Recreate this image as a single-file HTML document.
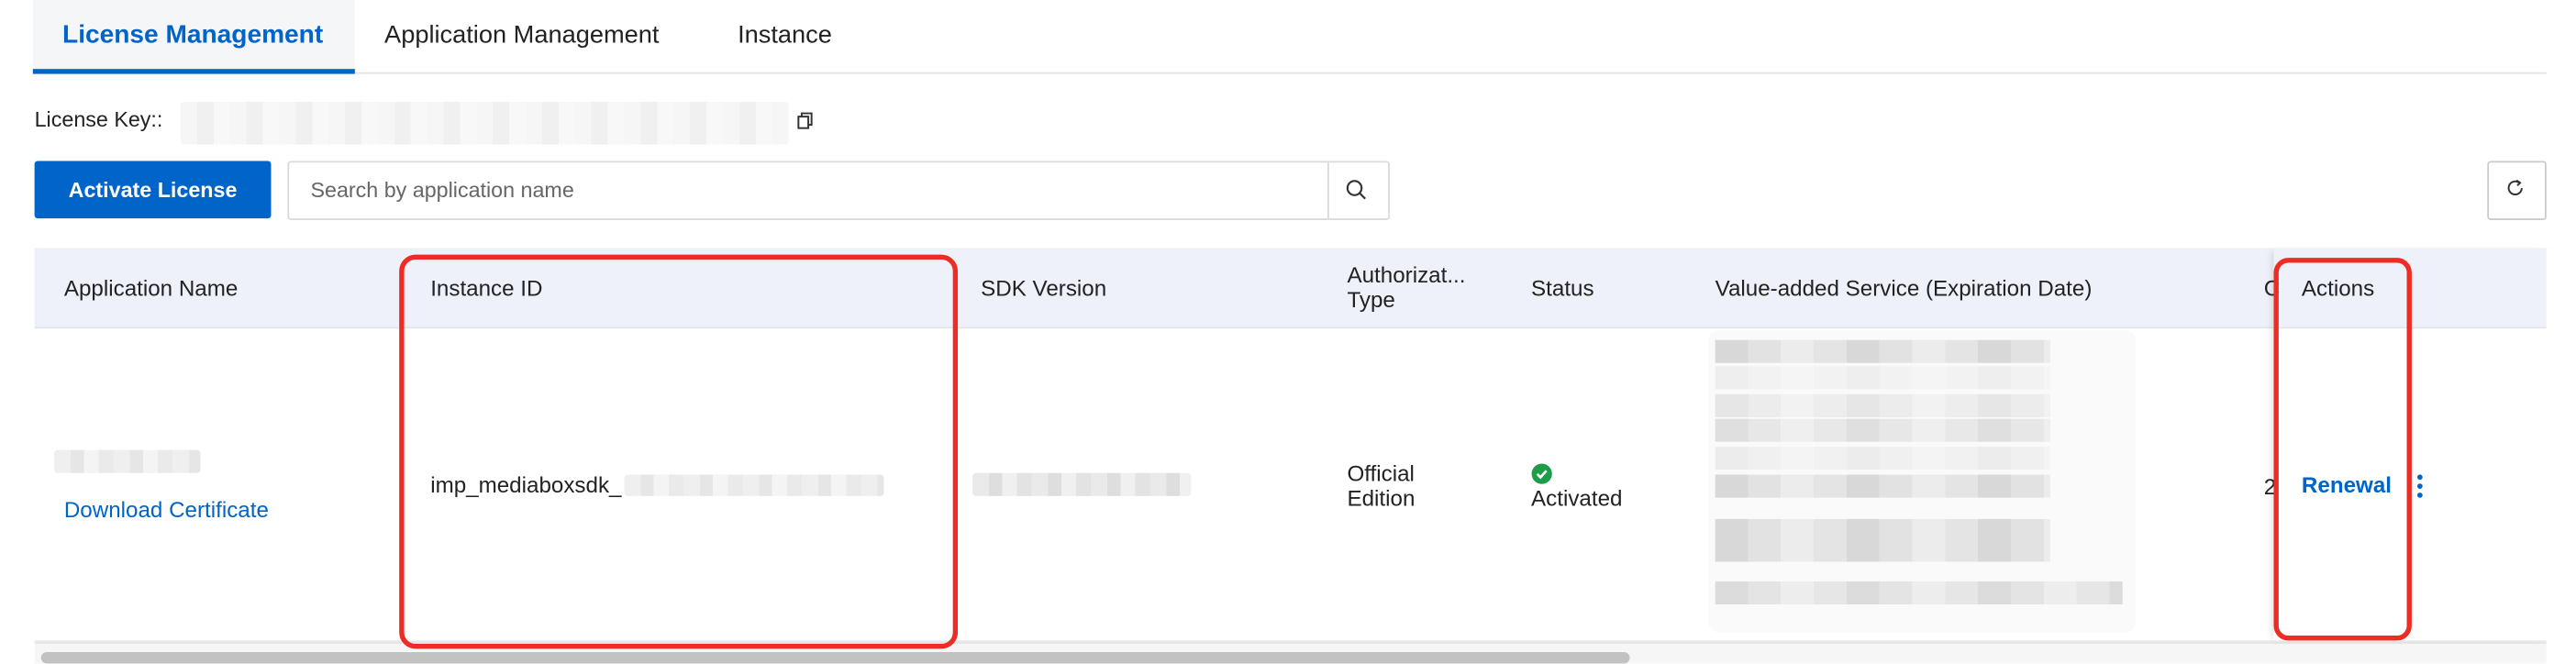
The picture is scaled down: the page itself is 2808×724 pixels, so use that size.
<!DOCTYPE html>
<html><head><meta charset="utf-8"><style>
html,body{margin:0;padding:0;background:#fff;width:2808px;height:722px;overflow:hidden}
#s{position:absolute;left:0;top:0;width:1568px;height:404px;transform:scale(1.790816);transform-origin:0 0;font-family:"Liberation Sans",sans-serif;color:#222;font-size:13.5px}
.a{position:absolute}
.blur{position:absolute;background:repeating-linear-gradient(90deg,#e4e4e4 0 10px,#d6d6d6 10px 18px,#ececec 18px 27px,#dcdcdc 27px 36px);border-radius:2px}
.lt{background:repeating-linear-gradient(90deg,#f0f0f0 0 10px,#e6e6e6 10px 20px,#f4f4f4 20px 30px)}
.row{position:absolute;left:1044px;width:204px;height:14px;background:repeating-linear-gradient(90deg,#d8d8d8 0 20px,#e2e2e2 20px 40px,#ececec 40px 60px,#e4e4e4 60px 80px)}
</style></head><body><div id="s">
<div class="a" style="left:20px;top:0;width:196px;height:43px;background:#f5f6f8"></div>
<div class="a" style="left:20px;top:44px;width:1530px;height:1px;background:#e3e3e3"></div>
<div class="a" style="left:20px;top:42px;width:196px;height:3px;background:#0064c8"></div>
<div class="a" style="left:38px;top:13px;font-size:15.7px;font-weight:bold;color:#0064c8">License Management</div>
<div class="a" style="left:234px;top:13px;font-size:15.2px;color:#222">Application Management</div>
<div class="a" style="left:449px;top:13px;font-size:15.2px;color:#222">Instance</div>

<div class="a" style="left:21px;top:65px;font-size:13px">License Key::</div>
<div class="blur lt" style="left:110px;top:62px;width:370px;height:26px;opacity:.6"></div>
<svg class="a" style="left:485px;top:68px" width="11" height="11" viewBox="0 0 11 11"><rect x="1" y="3" width="6" height="7" fill="none" stroke="#333" stroke-width="1.1"/><path d="M3 3V1h6v7H7" fill="none" stroke="#333" stroke-width="1.1"/></svg>

<div class="a" style="left:21px;top:98px;width:144px;height:35px;background:#0064c8;border-radius:2px;color:#fff;font-weight:bold;font-size:13px;line-height:35px;text-align:center">Activate License</div>
<div class="a" style="left:175px;top:98px;width:669px;height:34px;border:1px solid #dadada;border-radius:2px"></div>
<div class="a" style="left:189px;top:108px;font-size:13px;color:#666">Search by application name</div>
<div class="a" style="left:808px;top:99px;width:1px;height:34px;background:#dadada"></div>
<svg class="a" style="left:819px;top:109px" width="13" height="13" viewBox="0 0 13 13"><circle cx="5.5" cy="5.5" r="4.3" fill="none" stroke="#333" stroke-width="1.2"/><path d="M8.7 8.7L12 12" stroke="#333" stroke-width="1.2"/></svg>
<div class="a" style="left:1514px;top:98px;width:34px;height:34px;border:1px solid #c8cbd0;border-radius:2px"></div>
<svg class="a" style="left:1525px;top:109px" width="12" height="12" viewBox="0 0 12 12"><path d="M8.5 2.3A4 4 0 1 0 10 5.5" fill="none" stroke="#333" stroke-width="1.1"/><path d="M6.8 0.8L9 2.3 7.3 4" fill="none" stroke="#333" stroke-width="1.1"/></svg>

<div class="a" style="left:21px;top:151px;width:1529px;height:48px;background:#eef1f9"></div>
<div class="a" style="left:21px;top:199px;width:1529px;height:1px;background:#e3e3e3"></div>
<div class="a" style="left:21px;top:390px;width:1529px;height:2px;background:#e6e6e6"></div>
<div class="a" style="left:21px;top:392px;width:1529px;height:12px;background:#f6f6f6"></div>
<div class="a" style="left:25px;top:397px;width:967px;height:7px;background:#c2c2c2;border-radius:4px"></div>
<div class="a" style="left:1384px;top:151px;width:166px;height:240px;background:transparent;box-shadow:-3px 0 4px -2px rgba(0,0,0,.12)"></div>

<div class="a" style="left:39px;top:168px">Application Name</div>
<div class="a" style="left:262px;top:168px">Instance ID</div>
<div class="a" style="left:597px;top:168px">SDK Version</div>
<div class="a" style="left:820px;top:160px;line-height:15px">Authorizat...<br>Type</div>
<div class="a" style="left:932px;top:168px">Status</div>
<div class="a" style="left:1044px;top:168px">Value-added Service (Expiration Date)</div>
<div class="a" style="left:1378px;top:168px">C</div>
<div class="a" style="left:1401px;top:168px">Actions</div>

<div class="blur" style="left:33px;top:274px;width:89px;height:14px;opacity:.6"></div>
<div class="a" style="left:39px;top:303px;color:#0064c8">Download Certificate</div>
<div class="a" style="left:262px;top:288px">imp_mediaboxsdk_</div>
<div class="blur" style="left:380px;top:289px;width:158px;height:13px;opacity:.6"></div>
<div class="blur" style="left:592px;top:288px;width:133px;height:14px;opacity:.8"></div>
<div class="a" style="left:820px;top:282px;line-height:14.5px">Official<br>Edition</div>
<svg class="a" style="left:932px;top:282px" width="13" height="13" viewBox="0 0 13 13"><circle cx="6.5" cy="6.5" r="6.2" fill="#1d9c49"/><path d="M3.7 6.6L5.7 8.6 9.3 4.6" fill="none" stroke="#fff" stroke-width="1.5"/></svg>
<div class="a" style="left:932px;top:296px">Activated</div>
<div class="a" style="left:1040px;top:201px;width:260px;height:184px;background:#fafafa;border-radius:6px"></div>
<div class="row" style="top:207px"></div>
<div class="row" style="top:223px;opacity:.35"></div>
<div class="row" style="top:240px;opacity:.6"></div>
<div class="row" style="top:255px;opacity:.8"></div>
<div class="row" style="top:272px;opacity:.4"></div>
<div class="row" style="top:289px"></div>
<div class="row" style="top:316px"></div>
<div class="row" style="top:328px;opacity:1"></div>
<div class="row" style="top:354px;width:248px;opacity:.9"></div>
<div class="a" style="left:1378px;top:289px">2</div>
<div class="a" style="left:1401px;top:288px;color:#0064c8;font-weight:bold">Renewal</div>
<svg class="a" style="left:1470px;top:288px" width="6" height="16" viewBox="0 0 6 16"><circle cx="3" cy="2.5" r="1.6" fill="#0064c8"/><circle cx="3" cy="8" r="1.6" fill="#0064c8"/><circle cx="3" cy="13.5" r="1.6" fill="#0064c8"/></svg>

<div class="a" style="left:243px;top:155px;width:334px;height:234px;border:3px solid #ef2b25;border-radius:10px"></div>
<div class="a" style="left:1384px;top:157px;width:78px;height:227px;border:3px solid #ef2b25;border-radius:9px"></div>
</div></body></html>
